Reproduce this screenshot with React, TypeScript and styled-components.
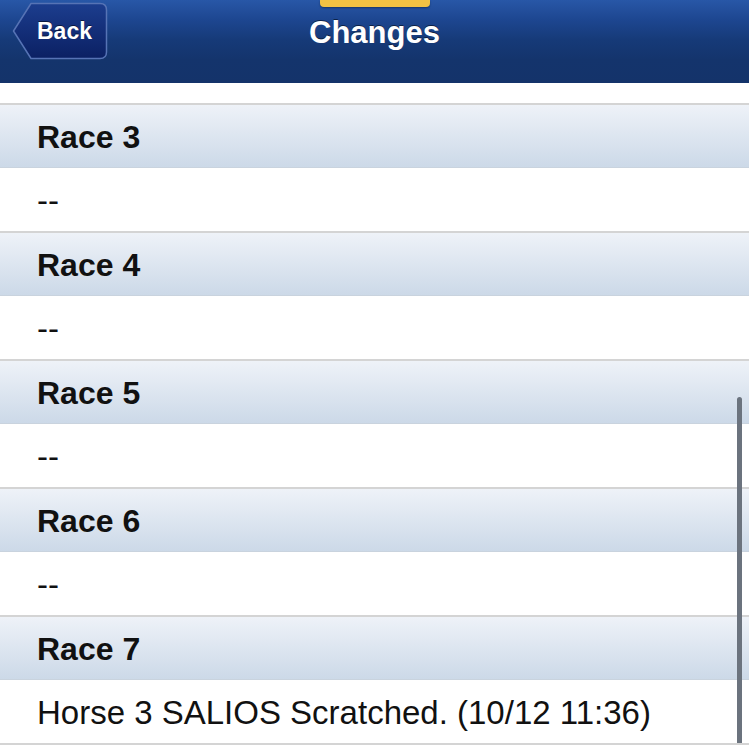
import { FunctionComponent } from "react";
import styled, { createGlobalStyle } from "styled-components";

const races = [
  { id: 3, note: "--" },
  { id: 4, note: "--" },
  { id: 5, note: "--" },
  { id: 6, note: "--" },
  { id: 7, note: "Horse 3 SALIOS Scratched. (10/12 11:36)" },
];

const BackShape: FunctionComponent = () => (
  <svg width="98" height="59" viewBox="0 0 98 59">
    <defs>
      <linearGradient id="backFill" x1="0" y1="0" x2="0" y2="1">
        <stop offset="0" stopColor="#1c3d8e" />
        <stop offset="1" stopColor="#0b2063" />
      </linearGradient>
    </defs>
    <path
      d="M20 1.5 H89 Q95.5 1.5 95.5 8 V50 Q95.5 56.5 89 56.5 H20 L2.5 29 Z"
      fill="url(#backFill)"
      stroke="#5673b5"
      strokeWidth="1.5"
      strokeLinejoin="round"
    />
  </svg>
);

const App: FunctionComponent = () => {
  return (
    <Page>
      <GlobalStyle />
      <NavBar>
        <Tab />
        <BackButton>
          <BackShape />
          <BackLabel>Back</BackLabel>
        </BackButton>
        <Title>Changes</Title>
        <div />
      </NavBar>
      <Spacer />
      {races.map((race) => (
        <Section key={race.id}>
          <RaceHeader>Race {race.id}</RaceHeader>
          <RaceBody>{race.note}</RaceBody>
        </Section>
      ))}
      <Scrollbar />
    </Page>
  );
};
export default App;

const GlobalStyle = createGlobalStyle`
  body {
    margin: 0;
    background: #ffffff;
    font-family: "Liberation Sans", Arial, sans-serif;
  }
`;

const Page = styled.div`
  position: relative;
  width: 749px;
  height: 745px;
  overflow: hidden;
  background: #ffffff;
  border-bottom: 2px solid #d4d4d4;
  box-sizing: border-box;
`;

const NavBar = styled.div`
  position: relative;
  height: 83px;
  box-sizing: border-box;
  padding: 2px 11px 0;
  display: grid;
  grid-template-columns: 98px 1fr 98px;
  align-items: start;
  background: linear-gradient(
    to bottom,
    #2857a7 0px,
    #1d4690 20px,
    #163a78 40px,
    #14346c 60px,
    #14336a 83px
  );
`;

const Tab = styled.div`
  position: absolute;
  top: 0;
  left: 320px;
  width: 110px;
  height: 7px;
  background: #f2c244;
  border-radius: 0 0 4px 4px;
  box-shadow: 0 1px 2px rgba(0, 0, 0, 0.35);
`;

const BackButton = styled.div`
  display: grid;
  width: 98px;
  height: 59px;
  svg {
    grid-area: 1 / 1;
  }
`;

const BackLabel = styled.span`
  grid-area: 1 / 1;
  align-self: center;
  padding-left: 26px;
  color: #ffffff;
  font-size: 23px;
  font-weight: bold;
  text-shadow: 0 -1px 0 rgba(0, 0, 0, 0.5);
`;

const Title = styled.h1`
  margin: 13px 0 0;
  text-align: center;
  color: #ffffff;
  font-size: 31px;
  font-weight: bold;
  text-shadow: 0 -1px 0 rgba(0, 0, 0, 0.5);
`;

const Spacer = styled.div`
  height: 20px;
`;

const Section = styled.div`
  border-top: 2px solid #d4d4d4;
`;

const RaceHeader = styled.div`
  height: 63px;
  display: flex;
  align-items: center;
  padding: 2px 0 0 37px;
  font-size: 32px;
  font-weight: bold;
  color: #111111;
  background: linear-gradient(to bottom, #eef2f8, #ccd9e8);
  border-bottom: 1px solid #c9d3de;
  box-sizing: border-box;
`;

const RaceBody = styled.div`
  height: 63px;
  display: flex;
  align-items: center;
  padding: 2px 0 0 37px;
  font-size: 33px;
  color: #111111;
  box-sizing: border-box;
`;

const Scrollbar = styled.div`
  position: absolute;
  right: 7px;
  top: 397px;
  width: 5px;
  height: 360px;
  background: #6b737e;
  border-radius: 3px;
`;
